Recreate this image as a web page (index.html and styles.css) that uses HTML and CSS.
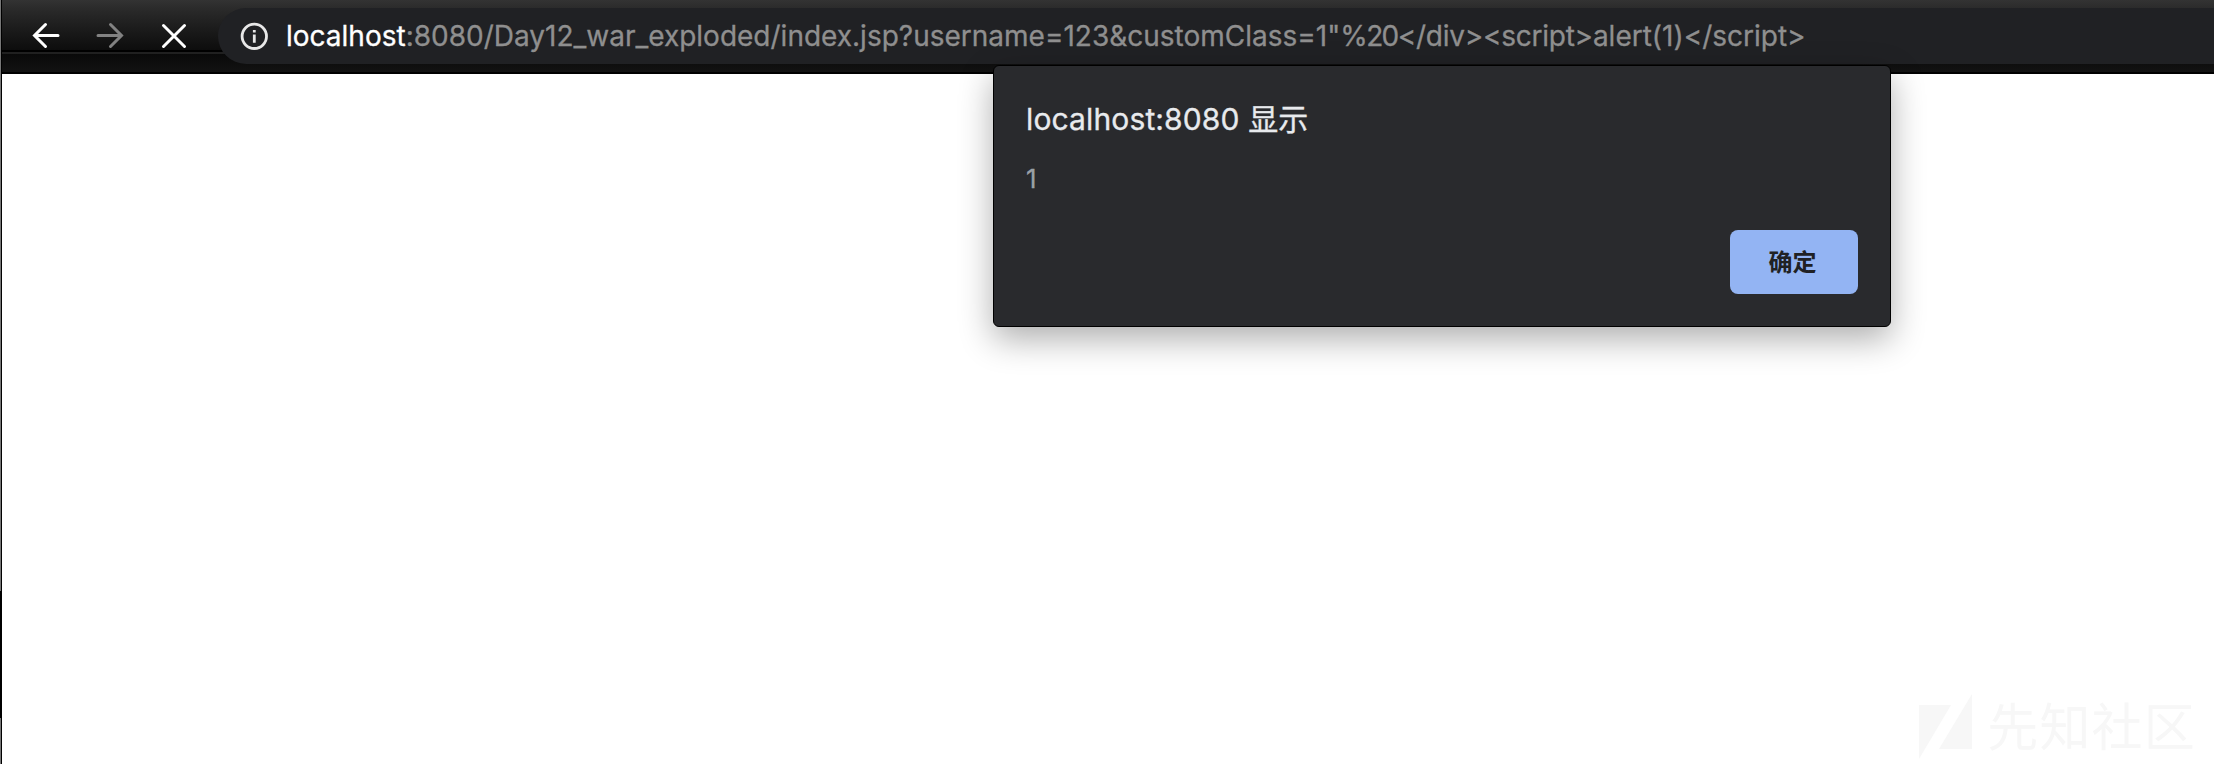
FILE: index.html
```html
<!DOCTYPE html>
<html lang="zh">
<head>
<meta charset="utf-8">
<title>localhost:8080</title>
<link rel="stylesheet" href="styles.css">
</head>
<body>
<div class="window">
  <header class="toolbar">
    <nav class="nav">
      <svg class="icon" viewBox="0 0 28 28"><path d="M26 13.5H3M13.5 2.5L2.5 13.5L13.5 24.5"/></svg>
      <svg class="icon disabled" viewBox="0 0 28 28"><path d="M2 13.5H25M14.5 2.5L25.5 13.5L14.5 24.5"/></svg>
      <svg class="icon" viewBox="0 0 28 28"><path d="M3.5 3.5L24.5 24.5M24.5 3.5L3.5 24.5"/></svg>
    </nav>
    <div class="address">
      <svg class="info" viewBox="0 0 28 28"><circle cx="14.3" cy="14.3" r="12.2"/><path d="M14.3 12.6V20.7M14.3 8V10.6"/></svg>
      <div class="url"><span class="host">localhost</span><span class="path">:8080/Day12_war_exploded/index.jsp?username=123&amp;customClass=1"<span class="escape">%20</span><span class="tags">&lt;/div&gt;&lt;script&gt;</span>alert(1)&lt;/script&gt;</span></div>
    </div>
  </header>
  <main class="page">
    <div class="watermark">
      <svg class="mark" viewBox="0 0 53 65"><path d="M0 11H32L0 65ZM53 0V55H20Z"/></svg>
      <span class="community">先知社区</span>
    </div>
  </main>
  <section class="dialog">
    <h1 class="title">localhost:8080 显示</h1>
    <p class="message">1</p>
    <button class="confirm">确定</button>
  </section>
  <div class="edge"></div>
</div>
</body>
</html>
```
FILE: styles.css
```css
* { box-sizing: border-box; }
body { margin: 0; background: #fff; font-family: Inter, "Noto Sans CJK SC", sans-serif; }
.window { position: relative; width: 2214px; height: 764px; overflow: hidden; display: flex; flex-direction: column; }
.toolbar {
  height: 74px; flex: none; display: flex; padding: 8px 0 10px 32px; border-bottom: 2px solid #000;
  background:
    linear-gradient(#000, #000) 0 50px / 100% 2px no-repeat,
    linear-gradient(#202020, #202020) 0 52px / 100% 2px no-repeat,
    linear-gradient(#333 0, #2b2b2b 8px, #1c1c1c 28px, #0d0d0d 50px, #090909 54px, #121212 72px);
}
.nav { display: flex; gap: 36px; padding-top: 14px; width: 186px; flex: none; }
.icon { width: 28px; height: 28px; fill: none; stroke: #fff; stroke-width: 3; stroke-linecap: round; }
.disabled { stroke: #828282; }
.address { flex: 1; height: 56px; display: flex; align-items: center; padding-left: 22px; border-radius: 28px 0 0 28px; background: #202124; }
.info { width: 28px; height: 28px; fill: none; stroke: #e8e8e8; stroke-width: 2.8; flex: none; }
.url { margin-left: 18px; font-size: 28px; line-height: 56px; white-space: nowrap; }
.host { color: #fff; -webkit-text-stroke: .3px #fff; }
.path { color: #8f8f8f; -webkit-text-stroke: .3px #8f8f8f; }
.escape { letter-spacing: -1.6px; }
.tags { letter-spacing: -.25px; }
.page { flex: 1; display: flex; justify-content: flex-end; align-items: flex-end; padding: 0 18px 1px 0; }
.watermark { display: flex; height: 69px; color: #f7f7f7; }
.mark { width: 53px; height: 65px; fill: #f7f7f7; }
.community { font: 400 51px/60px "Noto Sans CJK SC", sans-serif; letter-spacing: 1.2px; margin-left: 15px; }
.dialog {
  position: absolute; left: 993px; top: 65px; width: 898px; height: 262px; padding: 33px 32px;
  border: 1px solid #000; border-radius: 6px; background: #292a2d; display: flex; flex-direction: column;
  box-shadow: 0 12px 34px rgba(0, 0, 0, .32);
}
.title { margin: 0; font-size: 30px; line-height: 40px; font-weight: 400; letter-spacing: .13px; color: #e8eaed; white-space: nowrap; -webkit-text-stroke: .3px #e8eaed; }
.message { margin: 20px 0 0; font-size: 26px; line-height: 40px; color: #9aa0a6; -webkit-text-stroke: .3px #9aa0a6; }
.confirm { align-self: flex-end; margin-top: 31px; width: 128px; height: 64px; flex: none; border: 0; border-radius: 8px; background: #93b4f3; color: #202124; font: 700 24px/61px "Noto Sans CJK SC", sans-serif; padding: 0 3px 3px 0; }
.edge { position: absolute; left: 0; top: 0; width: 2px; height: 764px; background: linear-gradient(#000, #000) 1px 0 / 1px 100% no-repeat, linear-gradient(#777 0 591px, #000 591px 718px, #777 718px); }
```
